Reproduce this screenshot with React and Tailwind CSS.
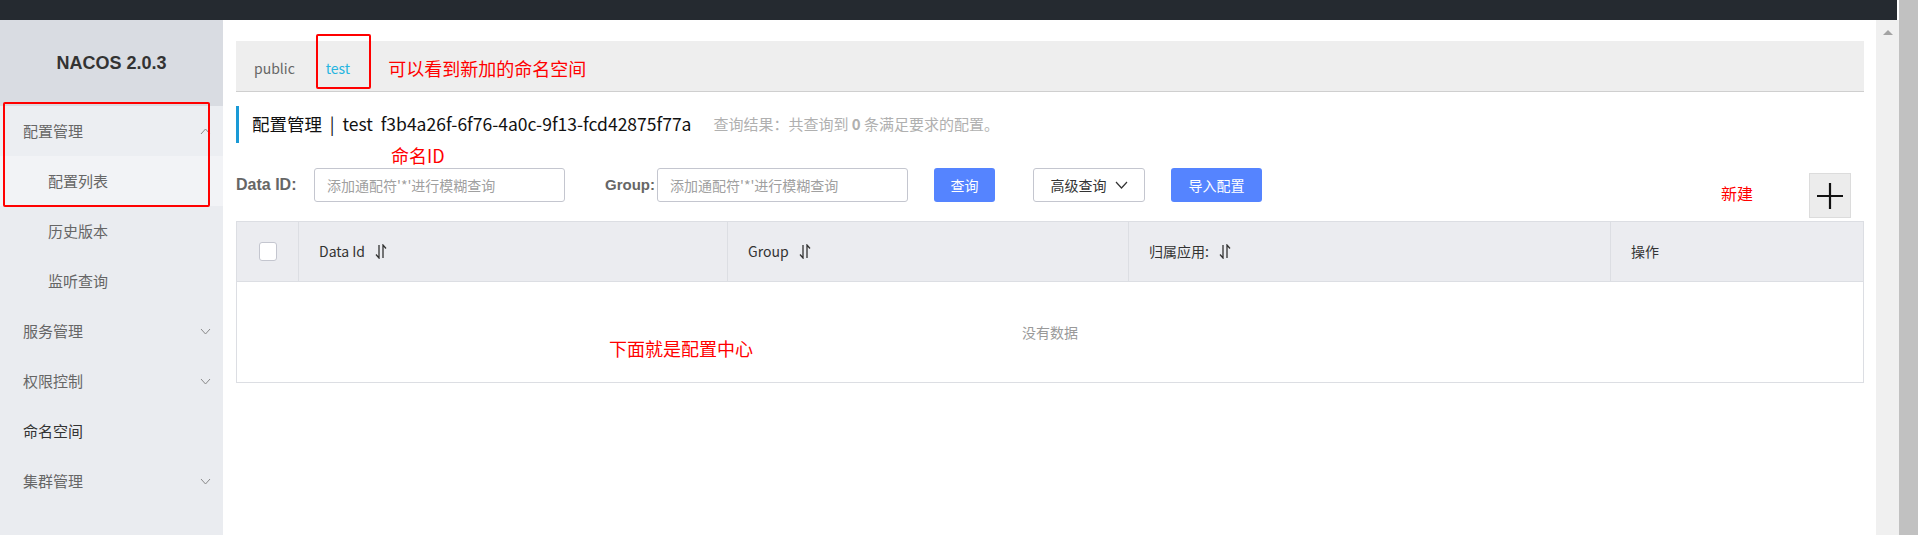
import React from "react";

const menu = [
  { label: "配置管理", chevron: "up", row: "bg-[#eceef2]" },
  { label: "配置列表", sub: true, row: "bg-[#f2f3f6]" },
  { label: "历史版本", sub: true },
  { label: "监听查询", sub: true },
  { label: "服务管理", chevron: "down" },
  { label: "权限控制", chevron: "down" },
  { label: "命名空间", dark: true },
  { label: "集群管理", chevron: "down" },
];

const columns = [
  { label: "Data Id", sort: true },
  { label: "Group", sort: true },
  { label: "归属应用:", sort: true },
  { label: "操作" },
];

function Chevron({ up }) {
  return (
    <svg width="11" height="7" viewBox="0 0 11 7" fill="none" stroke="#8a8a8a" strokeWidth="1">
      {up ? <path d="M1 6L5.5 1L10 6" /> : <path d="M1 1L5.5 6L10 1" />}
    </svg>
  );
}

function SortIcon() {
  return (
    <svg width="12" height="15" viewBox="0 0 12 15" fill="none" stroke="#333" strokeWidth="1.3">
      <path d="M4 1v13L1 10.5" />
      <path d="M8 14V1l3 3.5" />
    </svg>
  );
}

function Sidebar() {
  return (
    <aside className="relative w-[223px] shrink-0 bg-[#eaecf0] flex flex-col">
      {/* logo */}
      <div className="h-[86px] bg-[#d9dce2] flex items-center justify-center">
        <span className="text-[18px] font-bold text-[#333] font-['Liberation_Sans',sans-serif]">NACOS 2.0.3</span>
      </div>

      {menu.map((m) => (
        <div
          key={m.label}
          className={`h-[50px] flex items-center justify-between pr-[12px] ${m.sub ? "pl-[48px]" : "pl-[23px]"} ${m.row || ""}`}
        >
          <span className={`text-[15px] ${m.dark ? "text-[#333]" : "text-[#666]"}`}>{m.label}</span>
          {m.chevron && <Chevron up={m.chevron === "up"} />}
        </div>
      ))}

      {/* annotation box */}
      <div className="absolute left-[3px] top-[82px] w-[207px] h-[105px] border-2 border-[#ff0000] rounded-[2px]" />
    </aside>
  );
}

function Input() {
  return (
    <div className="w-[251px] h-[34px] shrink-0 border border-[#c4c6cf] rounded-[3px] bg-white flex items-center px-[12px] text-[14px] text-[#a0a0a0]">
      添加通配符'*'进行模糊查询
    </div>
  );
}

export default function App() {
  return (
    <div className="w-[1918px] h-[535px] flex overflow-hidden bg-white font-['Noto_Sans_CJK_SC','Liberation_Sans',sans-serif]">
      <div className="flex-1 flex flex-col">
        <div className="h-[20px] mr-[2px] bg-[#252a30]" />

        <div className="flex-1 flex">
          <Sidebar />

          {/* main */}
          <main className="flex-1 pl-[13px] pr-[12px] pt-[21px]">
            {/* namespace tabs */}
            <div className="h-[51px] bg-[#eeeeee] border-b border-[#cfcfcf] flex items-center pl-[18px] pt-[4px] text-[14px]">
              <span className="text-[#666]">public</span>
              <span className="relative ml-[31px] text-[#26b5e0]">
                test
                <span className="absolute left-[-10px] top-[-24px] w-[55px] h-[55px] border-2 border-[#ff0000] rounded-[2px]" />
              </span>
              <span className="ml-[38px] text-[18px] text-[#ff0000]">可以看到新加的命名空间</span>
            </div>

            {/* title */}
            <div className="mt-[14px] h-[37px] border-l-[3px] border-[#1a9ad6] pl-[13px] flex items-center">
              <span className="text-[17.5px] text-[#111] whitespace-pre">配置管理  |  test  f3b4a26f-6f76-4a0c-9f13-fcd42875f77a</span>
              <span className="ml-[22px] text-[15px] text-[#b0b0b0]">
                查询结果：共查询到 <b className="font-bold">0</b> 条满足要求的配置。
              </span>
            </div>

            <div className="h-[25px] pl-[155px] flex items-center text-[18px] text-[#ff0000]">命名ID</div>

            {/* filters */}
            <div className="flex items-start h-[53px]">
              <div className="h-[34px] flex items-center text-[16px] font-bold text-[#666] font-['Liberation_Sans',sans-serif] w-[78px] shrink-0">Data ID:</div>
              <Input />
              <div className="ml-[40px] mr-[2px] h-[34px] flex items-center text-[15px] font-bold text-[#666] font-['Liberation_Sans',sans-serif] whitespace-nowrap shrink-0">Group:</div>
              <Input />
              <button className="ml-[26px] w-[61px] h-[34px] shrink-0 rounded-[3px] bg-[#5584ff] text-white text-[14px]">查询</button>
              <button className="ml-[38px] w-[112px] h-[34px] shrink-0 rounded-[3px] border border-[#c4c6cf] bg-white text-[#333] text-[14px] flex items-center justify-center gap-[8px]">
                高级查询
                <svg width="13" height="8" viewBox="0 0 13 8" fill="none" stroke="#333" strokeWidth="1.2">
                  <path d="M1 1l5.5 6L12 1" />
                </svg>
              </button>
              <button className="ml-[26px] w-[91px] h-[34px] shrink-0 rounded-[3px] bg-[#5584ff] text-white text-[14px]">导入配置</button>
              <div className="flex-1" />
              <span className="mt-[13px] text-[16px] text-[#ff0000]">新建</span>
              <button className="ml-[56px] mr-[13px] mt-[5px] w-[42px] h-[45px] bg-[#ececec] border border-[#dcdcdc] flex items-center justify-center">
                <svg width="28" height="28" viewBox="0 0 28 28" stroke="#111" strokeWidth="2.2">
                  <path d="M14 1v26M1 14h26" />
                </svg>
              </button>
            </div>

            {/* table */}
            <div className="border border-[#dcdee3]">
              <div className="grid grid-cols-[62px_429px_401px_482px_1fr] h-[60px] bg-[#ebecf0] border-b border-[#dcdee3]">
                <div className="flex items-center justify-center border-r border-[#dcdee3]">
                  <div className="w-[18px] h-[19px] rounded-[3px] border border-[#c4c6cf] bg-white" />
                </div>
                {columns.map((c, i) => (
                  <div
                    key={c.label}
                    className={`flex items-center gap-[10px] pl-[20px] text-[14px] text-[#333] ${i < columns.length - 1 ? "border-r border-[#dcdee3]" : ""}`}
                  >
                    {c.label}
                    {c.sort && <SortIcon />}
                  </div>
                ))}
              </div>
              <div className="relative h-[100px] flex items-center justify-center text-[14px] text-[#999]">
                没有数据
                <span className="absolute left-[372px] top-[53px] text-[18px] text-[#ff0000]">下面就是配置中心</span>
              </div>
            </div>
          </main>

          {/* inner scrollbar track */}
          <div className="w-[23px] shrink-0 bg-[#f0f0f0] flex justify-center pt-[10px]">
            <div className="w-0 h-0 border-l-[5px] border-r-[5px] border-b-[5px] border-l-transparent border-r-transparent border-b-[#a3a3a3]" />
          </div>
        </div>
      </div>
      <div className="w-[19px] shrink-0 bg-[#c1c1c1]" />
    </div>
  );
}
